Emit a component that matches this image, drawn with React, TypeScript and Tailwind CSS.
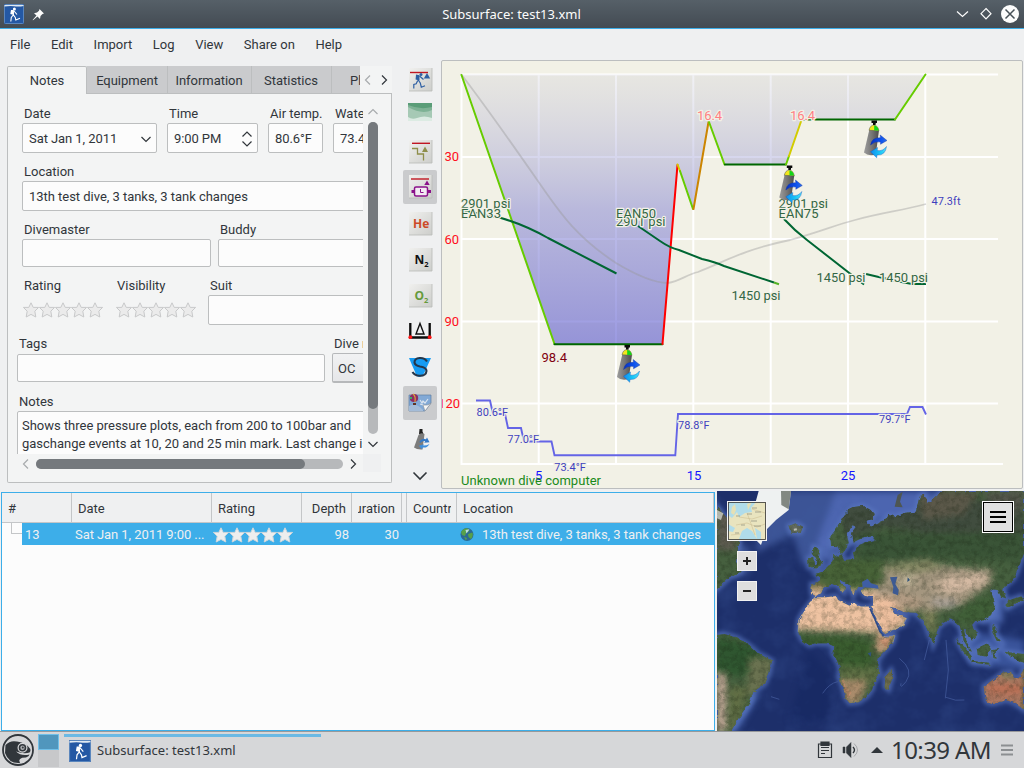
import React from 'react';

const STAR = 'M8 0.8 L10.2 5.4 L15.6 5.4 L11.8 9.2 L12.8 15 L8 12.4 L3.2 15 L4.2 9.2 L0.4 5.4 L5.8 5.4 Z';

function Stars({ fill, stroke }: { fill: string; stroke: string }) {
  return (
    <div className="flex">
      {[0, 1, 2, 3, 4].map((i) => (
        <svg key={i} width="16" height="16" viewBox="0 0 16 16">
          <path d={STAR} fill={fill} stroke={stroke} strokeWidth="1" />
        </svg>
      ))}
    </div>
  );
}

function Chevron({ dir, color = '#31363b', size = 12 }: { dir: 'l' | 'r' | 'u' | 'd'; color?: string; size?: number }) {
  const d = {
    l: 'M8 1.5 L3.5 6 L8 10.5',
    r: 'M4 1.5 L8.5 6 L4 10.5',
    u: 'M1.5 8 L6 3.5 L10.5 8',
    d: 'M1.5 4 L6 8.5 L10.5 4',
  }[dir];
  return (
    <svg className="shrink-0" width={size} height={size} viewBox="0 0 12 12" fill="none" stroke={color} strokeWidth="1.2">
      <path d={d} />
    </svg>
  );
}

function AppIcon({ size }: { size: number }) {
  return (
    <svg className="shrink-0" width={size} height={size} viewBox="0 0 20 20">
      <rect width="20" height="20" rx="1" fill="#2458a4" />
      <rect x="0.5" y="0.5" width="19" height="19" rx="1" fill="none" stroke="#5a86bd" />
      <path d="M0.5 1 H19.5 V2 Q15 3 10 2.2 Q5 1.8 0.5 2.6Z" fill="#dfe9f2" />
      <circle cx="10.4" cy="5" r="1.5" fill="#fff" />
      <path d="M9.5 6.5 L11.3 8.5 L13 10.5 M9 7 L9.5 11 L11.3 13.5 L11.8 16 L16 14.2 M9.2 11 L7.3 13.5 L6.8 17.5" fill="none" stroke="#fff" strokeWidth="1.1" />
      <path d="M7 6 L9.7 6 L10 11 L6.3 10Z" fill="#fff" />
    </svg>
  );
}

function TitleBar() {
  return (
    <div className="flex h-[29px] shrink-0 items-center border-b border-[#3daee9] bg-linear-to-b from-[#566068] to-[#434b53] px-1">
      <AppIcon size={20} />
      <svg className="ml-2" width="13" height="13" viewBox="0 0 13 13">
        <path d="M7.5 1 L12 5.5 L10.5 6 L8.5 8 L8 11 L5.5 8.5 L1 12.3 L0.6 12 L4.5 7.5 L2 5.2 L5 4.6 L7 2.8Z" fill="#fcfcfc" />
      </svg>
      <div className="flex-1 pt-px pl-[24px] text-center font-['Noto_Sans',sans-serif] text-[13px] text-[#fcfcfc]">Subsurface: test13.xml</div>
      <svg width="66" height="20" viewBox="0 0 66 20" fill="none" stroke="#fcfcfc" strokeWidth="1.2">
        <path d="M3 7.5 L8.5 12.5 L14 7.5" />
        <path d="M32 4.5 L37 9.7 L32 15 L27 9.7Z" />
        <circle cx="56" cy="10" r="9" fill="#fcfcfc" stroke="none" />
        <path d="M51.5 5.5 L60.5 14.5 M60.5 5.5 L51.5 14.5" stroke="#475057" strokeWidth="1.5" />
      </svg>
    </div>
  );
}

function MenuBar() {
  return (
    <div className="flex h-[31px] shrink-0 items-center gap-[20.6px] pl-[10px] text-[13px]">
      <span>File</span>
      <span>Edit</span>
      <span>Import</span>
      <span>Log</span>
      <span>View</span>
      <span>Share on</span>
      <span>Help</span>
    </div>
  );
}

const field = 'flex shrink-0 items-center rounded-[2px] border border-[#bcbebf] bg-[#fcfcfc] pt-px';
const label = 'mb-px flex h-[18px] items-center whitespace-nowrap pt-[2px] pl-[2px]';

function NotesForm() {
  return (
    <div className="h-[360px] w-[355px] overflow-hidden pt-[10px]">
      <div className="flex w-[400px] gap-[10px] pl-[14px]">
        <div className="w-[135px] shrink-0">
          <div className={label}>Date</div>
          <div className={`${field} h-[30px] justify-between pr-1 pl-[6px] tracking-[-0.07px]`}>Sat Jan 1, 2011<Chevron dir="d" /></div>
        </div>
        <div className="w-[91px] shrink-0">
          <div className={label}>Time</div>
          <div className={`${field} h-[30px] justify-between pr-1 pl-[6px] tracking-[-0.1px]`}>
            9:00 PM
            <svg width="12" height="16" viewBox="0 0 12 16" fill="none" stroke="#31363b" strokeWidth="1.2"><path d="M1.5 5.5 L6 1 L10.5 5.5 M1.5 10.5 L6 15 L10.5 10.5" /></svg>
          </div>
        </div>
        <div className="w-[55px] shrink-0">
          <div className={label}>Air temp.</div>
          <div className={`${field} h-[30px] pl-[6px] tracking-[-0.1px]`}>80.6°F</div>
        </div>
        <div className="w-[65px] shrink-0">
          <div className={label}>Water temp.</div>
          <div className={`${field} h-[30px] pl-[6px]`}>73.4°F</div>
        </div>
      </div>
      <div className="mt-[9px] w-[400px] pl-[14px]">
        <div className={label}>Location</div>
        <div className={`${field} h-[30px] pl-[6px] tracking-[-0.03px]`}>13th test dive, 3 tanks, 3 tank changes</div>
      </div>
      <div className="mt-[9px] flex w-[400px] gap-[7px] pl-[14px]">
        <div className="w-[189px] shrink-0">
          <div className={label}>Divemaster</div>
          <div className={`${field} h-[28px]`} />
        </div>
        <div className="w-[189px] shrink-0">
          <div className={label}>Buddy</div>
          <div className={`${field} h-[28px]`} />
        </div>
      </div>
      <div className="mt-[9px] flex w-[400px] pl-[14px]">
        <div className="w-[93px] shrink-0">
          <div className={label}>Rating</div>
          <div className="pt-[7px] pl-px"><Stars fill="#ebebeb" stroke="#c8c9ca" /></div>
        </div>
        <div className="w-[93px] shrink-0">
          <div className={label}>Visibility</div>
          <div className="pt-[7px] pl-px"><Stars fill="#ebebeb" stroke="#c8c9ca" /></div>
        </div>
        <div className="w-[200px] shrink-0">
          <div className={label}>Suit</div>
          <div className={`${field} h-[30px]`} />
        </div>
      </div>
      <div className="mt-[9px] flex w-[400px] gap-[7px] pl-[9px]">
        <div className="w-[308px] shrink-0">
          <div className={label}>Tags</div>
          <div className={`${field} mt-[2px] h-[28px]`} />
        </div>
        <div className="w-[80px] shrink-0">
          <div className={label}>Dive mode</div>
          <div className="flex h-[30px] items-center rounded-[2px] border border-b-2 border-[#b6b8ba] bg-linear-to-b from-[#f1f2f3] to-[#e6e7e9] pt-[2px] pl-[5px]">OC</div>
        </div>
      </div>
      <div className="mt-[9px] w-[400px] pl-[9px]">
        <div className={label}>Notes</div>
        <div className="h-[80px] rounded-[2px] border border-[#bcbebf] bg-[#fcfcfc] pt-[5px] pl-[4px] leading-[18px] tracking-[-0.02px] whitespace-nowrap">
          <div>Shows three pressure plots, each from 200 to 100bar and</div>
          <div>gaschange events at 10, 20 and 25 min mark. Last change is</div>
        </div>
      </div>
    </div>
  );
}

function LeftPanel() {
  const tab = 'flex h-[28px] shrink-0 items-center justify-center border-r border-b border-[#bcbebf] bg-[#cacbcd] pt-[2px]';
  return (
    <div className="w-[400px] shrink-0 pt-[6px] pl-[7px]">
      <div className="flex w-[385px] tracking-[-0.03px]">
        <div className="flex h-[28px] w-[80px] shrink-0 items-center justify-center rounded-t-[2px] border border-b-0 border-[#bcbebf] bg-[#f3f4f4]">Notes</div>
        <div className={`${tab} w-[81px]`}>Equipment</div>
        <div className={`${tab} w-[84px] pr-px`}>Information</div>
        <div className={`${tab} w-[80px] pr-px`}>Statistics</div>
        <div className="flex h-[28px] w-[28px] shrink-0 items-center overflow-hidden border-b border-[#bcbebf] bg-[#cacbcd] pt-[2px] pl-[18px] whitespace-nowrap">Photos</div>
        <div className="flex h-[28px] flex-1 items-center justify-around border-b border-[#bcbebf] bg-[#f3f4f4]">
          <Chevron dir="l" color="#a8abad" />
          <Chevron dir="r" />
        </div>
      </div>
      <div className="flex h-[389px] w-[385px] flex-col rounded-b-[2px] border border-t-0 border-[#bcbebf] bg-[#f3f4f4]">
        <div className="flex">
          <NotesForm />
          <div className="flex w-[20px] flex-col items-center pt-[12px]">
            <Chevron dir="u" color="#a8abad" />
            <div className="mt-[4px] mb-[4px] h-[312px] w-[10px] rounded-full bg-[#b7b9bb]">
              <div className="h-[287px] rounded-full bg-[#75797d]" />
            </div>
            <Chevron dir="d" />
          </div>
        </div>
        <div className="flex h-[18px]">
          <div className="flex w-[355px] items-center pt-px pl-[12px]">
            <Chevron dir="l" color="#a8abad" />
            <div className="mx-[4px] h-[10px] w-[307px] rounded-full bg-[#b7b9bb]">
              <div className="h-[10px] w-[269px] rounded-full bg-[#75797d]" />
            </div>
            <Chevron dir="r" />
          </div>
          <div className="w-[18px] bg-[#eff0f1]" />
        </div>
      </div>
    </div>
  );
}

function Tile({ children }: { children: React.ReactNode }) {
  return (
    <svg className="shrink-0" width="36" height="36" viewBox="0 0 36 36">
      <rect x="7" y="6" width="23" height="23" fill="url(#tile)" />
      <path d="M7 29 H30 V6" fill="none" stroke="#b9bab8" strokeWidth="0.8" />
      {children}
    </svg>
  );
}

function Toolbar() {
  const btn = 'flex h-[36px] w-[36px] items-center justify-center';
  const on = 'flex h-[34px] w-[34px] mb-[2px] ml-px items-center justify-center rounded-[2px] bg-[#cacbcd]';
  return (
    <div className="flex w-[41px] shrink-0 flex-col pt-[2px] pl-[2px]">
      <div className={btn}>
        <Tile>
          <path d="M8 10.5 H26" stroke="#c01622" strokeWidth="1.4" />
          <path d="M25 11 L28.2 16.5 H21.8Z" fill="#2e5fa3" />
          <circle cx="19" cy="12.6" r="1.5" fill="#2e5fa3" />
          <path d="M14 12.5 L17.5 13.3 L17.5 18.5 L13.6 17.5Z" fill="#2e5fa3" />
          <path d="M17.5 14 L21.5 17.5 M16.2 18 L18.3 21 L19.3 25.2 L23 23.8 M15.7 18.5 L14.2 21.7 L11.8 22.5 L11.8 26.5" fill="none" stroke="#2e5fa3" strokeWidth="1.2" />
        </Tile>
      </div>
      <div className={btn}>
        <svg width="36" height="36" viewBox="0 0 36 36">
          <rect x="6" y="5" width="24" height="18" fill="#dcebe3" />
          <path d="M6 5 H30 V20 Q22 17 15 20 Q10 22 6 19Z" fill="#a6c9b5" />
          <path d="M6 5 H30 V12 Q20 17 6 9Z" fill="#7eb295" />
          <path d="M6 5 H30 V9 Q18 12 6 7Z" fill="#5a9d78" />
        </svg>
      </div>
      <div className={btn}>
        <Tile>
          <path d="M10 9.3 H28" stroke="#c01622" strokeWidth="1.4" />
          <path d="M23 12.5 L26 18 H20Z" fill="#8e8e4a" />
          <path d="M10 14.5 H15.5 V20 H21.5 V26.5" fill="none" stroke="#8e8e4a" strokeWidth="1.3" />
        </Tile>
      </div>
      <div className={on}>
        <Tile>
          <path d="M9 10 H27" stroke="#c01622" strokeWidth="1.4" />
          <path d="M25 11.5 L27.7 16 H22.3Z" fill="#8a118a" />
          <rect x="12.5" y="18" width="13" height="9" rx="1.5" fill="#f3eaf3" stroke="#8a118a" strokeWidth="1.5" />
          <path d="M9.5 22.5 H12 M26 22.5 H29" stroke="#8a118a" strokeWidth="3" />
          <path d="M18.5 20 V23.5 H21.5" fill="none" stroke="#8a118a" />
        </Tile>
      </div>
      <div className={btn}>
        <Tile><text x="11" y="22.2" className="font-['Open_Sans',sans-serif] text-[12px] font-bold" fill="#cc4a28">He</text></Tile>
      </div>
      <div className={btn}>
        <Tile><text x="12.5" y="22" className="font-['Open_Sans',sans-serif] text-[12px] font-bold" fill="#111">N<tspan dy="3" fontSize="7.5">2</tspan></text></Tile>
      </div>
      <div className={btn}>
        <Tile><text x="12.5" y="22" className="font-['Open_Sans',sans-serif] text-[12px] font-bold" fill="#659a3c">O<tspan dy="3" fontSize="7.5">2</tspan></text></Tile>
      </div>
      <div className={btn}>
        <svg width="36" height="36" viewBox="0 0 36 36" fill="none">
          <path d="M8.3 9 V23.5 H27.7 V9" stroke="#0b0b0b" strokeWidth="2.3" />
          <path d="M14 20 L18 9.5 L22 20Z" stroke="#111" strokeWidth="1.4" />
          <circle cx="8.3" cy="23.2" r="1.9" fill="#ff1414" /><circle cx="27.7" cy="23.2" r="1.9" fill="#ff1414" />
        </svg>
      </div>
      <div className={btn}>
        <svg width="36" height="36" viewBox="0 0 36 36">
          <path d="M7 8 H29 L24 19 Q21 27 17.5 27 Q14.5 27 13 22Z" fill="#169bf2" />
          <path d="M25 11.5 Q22.5 7.5 17.5 8 Q12.5 8.5 12.5 12.5 Q13 15.5 18 16.5 Q24.5 17.5 24.5 21 Q24 26 17.5 25.8 Q12.5 25.5 10.5 22" fill="none" stroke="#25364a" strokeWidth="2.1" />
        </svg>
      </div>
      <div className={on}>
        <svg width="34" height="34" viewBox="0 0 34 34">
          <path d="M6 9 H28 V17 L22 25 H6Z" fill="#82a9d6" stroke="#5e7ea5" strokeWidth="0.7" />
          <path d="M6 20 Q13 16 20 24 V25 H6Z" fill="#a4bcd8" />
          <ellipse cx="11" cy="12" rx="4.2" ry="4" fill="#8b2f64" /><path d="M10 8 Q13 10 12 16" stroke="#dda23b" fill="none" strokeWidth="1.2" /><path d="M7 12 H9" stroke="#3cab66" strokeWidth="2" />
          <path d="M10 18 H13" stroke="#613426" strokeWidth="2" />
          <path d="M17 14 L19 17 L20 15 L22 17 L25 13 M17 18 L23 20" fill="none" stroke="#dbe4ef" strokeWidth="1.2" />
          <path d="M28 17 L22 25 L20 19 Q25 20 28 17Z" fill="#f6f6f6" stroke="#8b9097" strokeWidth="0.6" />
        </svg>
      </div>
      <div className={btn}>
        <svg width="36" height="36" viewBox="0 0 36 36">
          <path d="M17.5 7 H20.5 V9.5 L21.5 12 H17Z" fill="#222" />
          <path d="M16.5 13 Q18.5 10 22.5 12 L20.5 27.5 Q15 28 12 25.5Z" fill="#7c7c7c" />
          <path d="M17.5 19.5 Q20 15.5 24 17.2 L25 15.5 L27.5 20.2 L22.2 20.7 L23.2 19.3 Q21 18.5 18 21Z" fill="#3479c7" />
          <path d="M27.5 22 Q25 26.5 20.5 25.4 L20 27.3 L16.8 23.7 L22 22.2 L21.2 23.6 Q24.5 23.8 27.5 22Z" fill="#3f8edc" />
        </svg>
      </div>
      <div className={btn}>
        <svg width="36" height="36" viewBox="0 0 36 36" fill="none" stroke="#31363b" strokeWidth="1.6"><path d="M11.5 14.5 L18 21 L24.5 14.5" /></svg>
      </div>
      <svg width="0" height="0">
        <defs><linearGradient id="tile" x1="0" y1="0" x2="1" y2="1"><stop offset="0" stopColor="#f0f0ee" /><stop offset="1" stopColor="#cdcecb" /></linearGradient></defs>
      </svg>
    </div>
  );
}

function Tank({ x, y }: { x: number; y: number }) {
  return (
    <g transform={`translate(${x} ${y})`}>
      <path d="M6.5 9 L16 10 L12.8 34.5 Q5 36.5 1 32.5Z" fill="url(#tank)" />
      <path d="M6 10.3 Q7 5.2 11 5 Q15 5.5 16 10.8Z" fill="#f2e51c" stroke="#555" strokeWidth="0.5" />
      <path d="M11.2 5.2 Q15 6 15.8 10.6 H11.2Z" fill="#12d51c" />
      <path d="M8.5 0.5 H14 V3 H12.8 L12.5 5 H10 V3 H8.5Z" fill="#0b0b0b" />
      <path d="M7.5 25 Q9 17 17.5 17.8 L17.2 15 L24 20.5 L17.5 24.3 L17.6 22 Q12 20.8 7.5 25Z" fill="url(#arrowA)" stroke="#1434a0" strokeWidth="0.4" />
      <path d="M23.5 26.5 Q22.5 35.5 14 35 L13.7 37.8 L7.5 31.8 L14.5 27.5 L14.2 30.5 Q20 31.5 23.5 26.5Z" fill="url(#arrowB)" stroke="#0d59c4" strokeWidth="0.4" />
    </g>
  );
}

const HALO = { stroke: '#f2f1e6', strokeWidth: 2.5, paintOrder: 'stroke' as const, strokeLinejoin: 'round' as const };

function Profile() {
  return (
    <div className="w-[582px] shrink-0 overflow-hidden rounded-[2px] border border-[#bcbebf] bg-[#f2f1e6]">
      <svg width="580" height="427" viewBox="442 61 580 427" className="font-[Roboto,sans-serif] text-[13px]" fill="none">
        <defs>
          <linearGradient id="depth" gradientUnits="userSpaceOnUse" x1="0" y1="74" x2="0" y2="344">
            <stop offset="0" stopColor="#c8c8d4" stopOpacity="0.26" />
            <stop offset="0.5" stopColor="#8080d2" stopOpacity="0.5" />
            <stop offset="1" stopColor="#5a58ce" stopOpacity="0.61" />
          </linearGradient>
          <linearGradient id="tank"><stop offset="0.1" stopColor="#969696" /><stop offset="0.5" stopColor="#777" /><stop offset="1" stopColor="#4c4c4c" /></linearGradient>
          <linearGradient id="arrowA"><stop offset="0" stopColor="#0a2fb8" /><stop offset="0.6" stopColor="#0a50ee" /><stop offset="1" stopColor="#2d6de8" /></linearGradient>
          <linearGradient id="arrowB"><stop offset="0" stopColor="#1188ee" /><stop offset="0.6" stopColor="#18c8f6" /><stop offset="1" stopColor="#55dcf6" /></linearGradient>
        </defs>
        <g stroke="#fff" strokeWidth="2">
          <path d="M461 74.5 H998 M461 157 H998 M461 239 H998 M461 321.5 H998 M461 403.5 H998 M461 464 H1003" />
          <path d="M461.5 74 V465 M538.7 74 V465 M616 74 V465 M693.3 74 V465 M770.7 74 V465 M848 74 V465 M925.3 74 V465" />
        </g>
        <path d="M461.5 74.5 L554.5 344 H662.5 L678 165 L693.5 209.5 L709 121 L724.5 164.5 H786 L801.5 119.5 H895 L925.5 74.5Z" fill="url(#depth)" />
        <path d="M461 74 C490 112 515 148 540 184 C562 216 578 238 616 263 C636 275 655 283 668 283 C680 281 686 275 698 272 C724 262 742 250 790 240 C820 232 835 225 855 220 C885 212 900 211 926 204" stroke="#999" strokeOpacity="0.4" strokeWidth="1.8" />
        <g strokeWidth="2" strokeLinecap="round">
          <path d="M461.5 75 L554.5 344" stroke="#66cc00" />
          <path d="M554.5 344.3 H662.5" stroke="#006600" />
          <path d="M662.5 344 L677.5 165" stroke="#ff0000" />
          <path d="M677.5 164.5 L680 171" stroke="#d7c800" />
          <path d="M680 171 L693 209" stroke="#66cc00" />
          <path d="M693.5 209 L708.5 122" stroke="#cc8500" />
          <path d="M709 122 L724.5 164.5" stroke="#66cc00" />
          <path d="M725 164.5 H786" stroke="#006600" />
          <path d="M786 164.5 L789 156" stroke="#66cc00" />
          <path d="M789 156 L801.5 120" stroke="#d3cc00" />
          <path d="M801.5 119.5 H895" stroke="#006600" />
          <path d="M895 119.5 L925.5 74.5" stroke="#66cc00" />
        </g>
        <g stroke="#006633" strokeWidth="2">
          <path d="M461 210 L501 218 Q525 225 548 238 L616.5 273.5" />
          <path d="M638 226 L660 241 Q670 248 679 250 L702 259 Q715 262 724 266 L774 282.5" />
          <path d="M774 282.5 L779 284.3" stroke="#54b327" />
          <path d="M784 219 Q795 231 807 240 L848 272 L864 284.5 M866 274 Q895 281 912 284 H926" />
        </g>
        <path d="M476 400.5 H490 L493 414 H505 L508 428 H521 L524 441.5 H551.5 L554.5 455.3 H675.3 L678 414 H907 L910 407 H922.5 L926 414.5" stroke="#6464e6" strokeWidth="1.9" />
        <Tank x={616} y={344.5} />
        <Tank x={863} y={120} />
        <g fill="#336644" {...HALO}>
          <text x="461" y="208" textLength="49.5">2901 psi</text>
          <text x="461" y="218" textLength="40">EAN33</text>
          <text x="616" y="226" textLength="49.5">2901 psi</text>
          <text x="616" y="217.5" textLength="40">EAN50</text>
          <text x="778.5" y="208" textLength="49.5">2901 psi</text>
          <text x="778.5" y="218" textLength="40">EAN75</text>
          <text x="731.5" y="300" textLength="49">1450 psi</text>
          <text x="816.5" y="282" textLength="49">1450 psi</text>
          <text x="879" y="282" textLength="49">1450 psi</text>
        </g>
        <Tank x={778.3} y={165} />
        <g fill="#ff7f84" {...HALO}>
          <text x="697" y="119.5" textLength="25">16.4</text>
          <text x="790" y="119.5" textLength="25">16.4</text>
        </g>
        <text x="541.5" y="362" fill="#7f0010" textLength="25.5">98.4</text>
        <g fill="#ff0d20" textAnchor="end">
          <text x="459" y="161">30</text>
          <text x="459" y="243.6">60</text>
          <text x="459" y="325.8">90</text>
          <text x="460" y="408">120</text>
        </g>
        <g fill="#1414ff" textAnchor="middle">
          <text x="538.7" y="479.5">5</text>
          <text x="694" y="479.5">15</text>
          <text x="848" y="479.5">25</text>
        </g>
        <g fill="#3f3fbe" fontSize="11" {...HALO}>
          <text x="476.5" y="415.5" textLength="31.5">80.6°F</text>
          <text x="507.5" y="443" textLength="31.5">77.0°F</text>
          <text x="554.3" y="470.5" textLength="31.5">73.4°F</text>
          <text x="678" y="429.3" textLength="31.5">78.8°F</text>
          <text x="879" y="423" textLength="31.5">79.7°F</text>
          <text x="931.5" y="204.5" textLength="29">47.3ft</text>
        </g>
        <text x="461" y="485.3" fill="#1a8a1a" textLength="140">Unknown dive computer</text>
      </svg>
    </div>
  );
}

function DiveList() {
  const th = 'flex h-[29px] shrink-0 items-center overflow-hidden whitespace-nowrap border-r border-[#c4c6c8] pt-[2px]';
  return (
    <div className="ml-px h-[239px] w-[714px] shrink-0 border border-[#3daee9] bg-[#fcfcfc]">
      <div className="flex h-[30px] border-b border-[#c4c6c8] bg-[#eff0f1]">
        <div className={`${th} w-[70px] pl-[6px]`}>#</div>
        <div className={`${th} w-[140px] pl-[6px]`}>Date</div>
        <div className={`${th} w-[90px] pl-[6px]`}>Rating</div>
        <div className={`${th} w-[50px] justify-end pr-[5px]`}>Depth</div>
        <div className={`${th} w-[50px] px-[6px]`}><div className="flex w-[38px] justify-end overflow-hidden">Duration</div></div>
        <div className={`${th} w-[5px]`} />
        <div className={`${th} w-[50px] pl-[6px]`}><div className="w-[38px] overflow-hidden">Country</div></div>
        <div className={`${th} flex-1 pl-[6px]`}>Location</div>
      </div>
      <div className="flex h-[22px]">
        <div className="flex w-[20px] justify-end"><div className="mt-[-1px] h-[12px] w-[11px] border-b border-l border-[#c4c6c8]" /></div>
        <div className="flex flex-1 items-center bg-[#3daee9] pt-px whitespace-nowrap text-[#eff0f1]">
          <div className="w-[50px] pl-[3px]">13</div>
          <div className="w-[141px] pl-[3px] tracking-[-0.07px]">Sat Jan 1, 2011 9:00 ...</div>
          <div className="w-[89px]"><Stars fill="#eeeeee" stroke="#cfd6da" /></div>
          <div className="w-[47px] text-right">98</div>
          <div className="w-[50px] text-right">30</div>
          <svg className="ml-[61px]" width="14" height="15" viewBox="0 0 14 15">
            <circle cx="7" cy="7.5" r="6.5" fill="#2b6a95" />
            <path d="M1 5 Q4 0.5 8 1.5 L9.5 4 L6 6 L5 9 L2 8Z M8 7 L12.5 5.5 Q13.5 9 11 12 L8.5 10Z M4 10 L7 11 L6 13.5Z" fill="#57a14a" />
            <path d="M5.5 3 L9.5 2.2 L6.5 6.5Z" fill="#bfe0e4" />
          </svg>
          <div className="ml-[8px] tracking-[-0.03px]">13th test dive, 3 tanks, 3 tank changes</div>
        </div>
      </div>
    </div>
  );
}

const AFRICA = 'M248 390 L262 365 L280 342 L296 322 L330 322 L360 318 L366 330 L380 337 L402 348 L412 340 L435 350 L458 350 L466 370 L482 400 L492 425 L503 440 L537 437 L530 460 L505 486 L488 505 L484 525 L492 550 L475 575 L468 600 L452 620 L428 637 L400 640 L388 622 L380 590 L368 560 L372 535 L362 510 L350 490 L352 468 L335 460 L300 460 L280 466 L258 450 L246 425Z';
const EURASIA = 'M288 312 L286 282 L310 280 L313 262 L298 252 L320 245 L340 225 L350 212 L352 190 L366 200 L378 196 L385 210 L415 208 L412 190 L422 178 L430 165 L455 155 L480 150 L470 138 L430 148 L410 158 L405 130 L420 110 L410 105 L392 130 L398 158 L388 180 L374 196 L364 168 L345 168 L343 140 L365 110 L385 75 L408 52 L440 48 L476 68 L470 88 L448 92 L465 110 L500 95 L520 75 L540 80 L560 70 L600 65 L612 18 L625 14 L635 40 L650 30 L680 3 L924 3 L924 190 L905 240 L890 270 L865 290 L862 300 L870 325 L855 320 L845 300 L822 298 L832 325 L838 345 L828 375 L800 392 L778 392 L768 405 L784 435 L768 452 L750 430 L742 410 L752 455 L768 485 L760 482 L742 450 L732 412 L712 392 L702 388 L680 400 L665 418 L658 450 L648 452 L636 425 L622 390 L608 378 L598 368 L560 366 L538 355 L522 350 L534 370 L552 376 L572 385 L562 405 L530 420 L504 432 L492 410 L475 375 L464 350 L474 345 L474 322 L446 318 L436 300 L450 292 L424 290 L418 300 L412 316 L400 285 L380 272 L372 272 L386 292 L384 308 L362 284 L350 282 L328 290 L312 310 L300 318Z';
const SAMERICA = 'M3 435 L25 432 L60 442 L100 465 L125 490 L168 512 L160 545 L148 580 L112 605 L100 640 L70 680 L45 724 L3 724Z';
const AUSTRALIA = 'M803 590 L830 570 L860 548 L885 545 L890 560 L912 562 L924 530 L924 660 L898 640 L870 630 L830 642 L810 636Z';
const OTHER = 'M276 205 L292 200 L294 228 L278 232Z M292 170 L310 180 L306 200 L320 220 L305 235 L292 235 L304 215 L290 190Z M218 108 L240 100 L260 112 L254 128 L225 128Z M508 560 L525 540 L530 560 L518 600 L506 590Z M720 445 L745 470 L768 500 L762 510 L738 480Z M765 512 L820 518 L820 524 L768 518Z M782 475 L815 460 L825 475 L812 500 L785 495Z M828 478 L850 474 L836 488 L842 506 L832 504Z M868 485 L924 492 L924 520 L890 505Z M830 405 L842 410 L838 430 L856 455 L842 452 L828 425Z M868 345 L882 330 L915 318 L924 330 L890 345 L875 355Z M650 448 L656 455 L652 464Z';
const NAMERICA = 'M3 50 L25 75 L45 100 L70 155 L60 215 L75 245 L40 262 L3 298Z';
const COASTS = [AFRICA, EURASIA, SAMERICA, AUSTRALIA, OTHER, NAMERICA];

function WorldMap() {
  return (
    <svg className="block" width="307" height="240" viewBox="3 3 921 720" fill="none">
      <defs>
        <clipPath id="land">{COASTS.map((d, i) => <path key={i} d={d} />)}</clipPath>
        <filter id="soft" x="-20%" y="-20%" width="140%" height="140%" colorInterpolationFilters="sRGB"><feGaussianBlur stdDeviation="10" /></filter>
        <filter id="shelf" x="-5%" y="-5%" width="110%" height="110%" colorInterpolationFilters="sRGB"><feGaussianBlur stdDeviation="6" /></filter>
        <filter id="rough" x="0" y="0" width="100%" height="100%" colorInterpolationFilters="sRGB">
          <feTurbulence type="fractalNoise" baseFrequency="0.06" numOctaves="3" seed="5" result="n" />
          <feDisplacementMap in="SourceGraphic" in2="n" scale="12" xChannelSelector="R" yChannelSelector="G" />
        </filter>
        <filter id="grain" x="0" y="0" width="100%" height="100%" colorInterpolationFilters="sRGB">
          <feTurbulence type="fractalNoise" baseFrequency="0.06" numOctaves="4" seed="8" />
          <feColorMatrix values="0 0 0 0 0.1  0 0 0 0 0.14  0 0 0 0 0.08  2 0 0 0 -0.8" />
        </filter>
        <filter id="light" x="0" y="0" width="100%" height="100%" colorInterpolationFilters="sRGB">
          <feTurbulence type="fractalNoise" baseFrequency="0.012" numOctaves="4" seed="3" />
          <feColorMatrix values="0 0 0 0 0.25  0 0 0 0 0.36  0 0 0 0 0.62  0 2 0 0 -0.85" />
        </filter>
      </defs>
      <rect width="930" height="730" fill="#1d2f6a" />
      <g filter="url(#soft)">
        <path d="M180 3 H924 V90 L560 110 L300 200 L260 230 L230 130 L120 190 L130 100Z" fill="#3c5496" />
        <path d="M360 3 H640 V75 L520 100 L400 50 L340 160 L300 160Z" fill="#4c65b0" />
        <path d="M310 140 L345 150 L350 215 L300 205Z" fill="#5069b4" />
        <path d="M730 420 L924 450 V540 L760 520Z" fill="#3a549b" />
        <path d="M820 290 L860 300 V400 L790 400Z" fill="#4e69b2" />
        <path d="M30 120 L100 180 L100 250 L40 260Z" fill="#3d5596" />
        <path d="M280 480 L350 560 L330 700 L220 690Z" fill="#182a64" />
        <path d="M100 610 L130 610 L90 680 L60 724 H40Z" fill="#4e6bb5" />
      </g>
      <rect width="930" height="730" filter="url(#light)" opacity="0.3" />
      <g stroke="#5b78c2" strokeWidth="14" filter="url(#shelf)" opacity="0.75">{COASTS.map((d, i) => <path key={i} d={d} />)}</g>
      <g stroke="#4c66a8" strokeWidth="3" opacity="0.6"><path d="M550 505 Q595 540 570 575 Q550 600 555 580 M690 450 L697 540 L688 625 M640 450 L625 510 M320 610 Q340 580 365 575 M690 622 Q720 635 745 630 M165 620 L190 628" /></g>
      <path d="M128 3 H225 L218 60 L180 90 L150 120 L135 165 L120 150 L115 50Z" fill="#eef1f1" />
      <path d="M195 3 H225 L218 58 L196 45Z" fill="#676e67" opacity="0.8" />
      <g filter="url(#rough)">
        <g clipPath="url(#land)">
          <rect width="924" height="726" fill="#46603f" />
          <g filter="url(#soft)">
            <path d="M340 30 H924 V130 H620 L500 110 L400 150Z" fill="#414d3f" />
            <path d="M430 130 H924 V215 L700 200 L430 215Z" fill="#3a5437" />
            <path d="M610 3 H790 L740 75 L620 90Z" fill="#5b5849" />
            <path d="M800 3 H924 V60 L850 80Z" fill="#54564c" />
            <path d="M300 210 H500 V300 H300Z" fill="#486338" />
            <path d="M500 235 L620 210 L700 230 L830 240 L825 280 L790 305 L735 345 L650 365 L470 345 L440 310 L510 270Z" fill="#a4967f" />
            <path d="M500 222 L640 206 L680 235 L600 250 L520 245Z" fill="#868965" />
            <path d="M470 318 L560 310 L620 330 L600 366 L540 350Z" fill="#b29b83" />
            <path d="M645 290 L700 260 L810 250 L810 275 L740 305 L700 310Z" fill="#d6bba4" />
            <path d="M550 255 L590 250 L605 285 L555 290Z" fill="#beb297" />
            <path d="M280 280 H320 V318 H285Z" fill="#8b7a52" />
            <path d="M620 365 H660 V430 L625 405Z" fill="#7d8259" />
            <path d="M640 325 L720 330 L725 352 L660 350Z" fill="#aea59d" />
            <path d="M740 350 L840 310 L830 400 L710 400Z" fill="#405f38" />
            <path d="M230 300 H475 L500 428 L230 418Z" fill="#efc3a2" />
            <path d="M470 320 L520 320 L585 390 L500 440Z" fill="#eebf9e" />
            <path d="M480 435 L540 435 L505 490 L475 480Z" fill="#c39a7a" />
            <path d="M245 445 L400 443 L470 455 V530 L370 530 L345 475 L250 472Z" fill="#3a5d2f" />
            <path d="M370 530 H490 V580 H375Z" fill="#5e7045" />
            <path d="M370 570 H455 L430 642 H390Z" fill="#a98b6b" />
            <path d="M500 540 H530 V600 H505Z" fill="#7c7253" />
            <path d="M3 440 L160 480 V550 L3 560Z" fill="#2f5630" />
            <path d="M100 500 H170 V590 L90 620Z" fill="#6a7250" />
            <path d="M3 550 H30 V724 H3Z" fill="#c4a998" />
            <path d="M40 590 H100 L60 724 H40Z" fill="#616e45" />
            <path d="M795 540 H924 V660 H795Z" fill="#ad7761" />
            <path d="M820 585 H924 V610 H820Z" fill="#bd6f54" />
            <path d="M860 540 L900 550 L890 570 L850 560Z" fill="#7f7c58" />
            <path d="M3 60 H60 V180 H3Z" fill="#5e5c51" />
            <path d="M218 100 H262 V130 H218Z" fill="#6c6f66" />
          </g>
          <path d="M380 560 L390 590 L405 610 L396 625 L384 600Z M490 450 L525 440 L510 475Z" fill="#d89270" opacity="0.5" />
          <rect width="930" height="730" filter="url(#grain)" opacity="0.35" />
        </g>
      </g>
      <path d="M246 425 L248 390 L280 342 L296 322 M402 348 L412 340 L435 350 L458 350 M503 440 L537 437 L530 460 M530 420 L562 405 L572 385" stroke="#f5ddc8" strokeWidth="2" opacity="0.45" />
      <path d="M462 356 L478 390 L492 425 L503 437" stroke="#304c88" strokeWidth="5" />
      <path d="M522 262 L544 260 L538 282 L548 300 L546 316 L530 310 L532 290Z" fill="#3d5a92" />
      <path d="M440 292 L438 276 L455 266 L465 280 L485 286 L488 296 L462 293Z" fill="#3f5ea3" />
      <path d="M575 262 L582 270 L574 276Z M455 490 L466 486 L464 500Z" fill="#315379" />
      <path d="M536 50 L545 15 L560 5 L552 35 L560 52Z" fill="#4e5652" />
      <path d="M3 60 L22 70 L15 90 L3 85Z M233 116 L242 115 L243 121 L234 122Z" fill="#dfe2dc" opacity="0.7" />
    </svg>
  );
}

function EuropeThumb() {
  return (
    <svg width="40" height="40" viewBox="0 0 40 40">
      <rect width="40" height="40" fill="#e9e4bf" />
      <path d="M1 1 H29 L24 7 L25 11 L18 12 L12 16 L10 11 L5 17 L1 14Z M1 23 L8 27 L6 31 L1 30Z M15 30 L20 27 L25 30 L30 38 H12Z M28 27 L34 31 V38 H30Z" fill="#b0dcea" />
      <path d="M5 6 L8 3 L9 9 L7 14 L4 12Z M20 3 L25 1 L21 9Z" fill="#e5e0b5" />
      <path d="M12 16 L25 18 L35 15 M9 24 L20 22 L30 26 L38 23 M20 12 L23 20 L28 34 M25 8 L38 12 M4 34 L13 33" fill="none" stroke="#c9b98d" strokeWidth="0.5" />
      <path d="M9 15 H13 M20 13 H25 M24 20 H30 M14 24 H18 M28 11 H34 M27 25 H34 M8 32 H12 M25 7 H30" stroke="#8d8c7c" strokeWidth="0.7" />
      <rect x="0.5" y="0.5" width="39" height="39" fill="none" stroke="#f5f5f5" />
      <rect x="1.5" y="1.5" width="37" height="37" fill="none" stroke="#333" strokeWidth="0.8" />
    </svg>
  );
}

function MapPane() {
  const zoom = 'flex h-[20px] w-[20px] items-center justify-center border border-[#f2f2f2] bg-[#dedede]';
  return (
    <div className="relative ml-[2px] h-[240px] w-[307px] shrink-0 overflow-hidden">
      <WorldMap />
      <div className="absolute top-[10px] left-[10px] flex flex-col items-center gap-[10px]">
        <EuropeThumb />
        <div className={zoom}><svg width="10" height="10" viewBox="0 0 10 10" stroke="#222" strokeWidth="2"><path d="M1 5 H9 M5 1 V9" /></svg></div>
        <div className={zoom}><svg width="10" height="10" viewBox="0 0 10 10" stroke="#222" strokeWidth="2"><path d="M1 5 H9" /></svg></div>
      </div>
      <div className="absolute top-[10px] left-[265px] flex h-[32px] w-[32px] items-center justify-center border border-white bg-black p-px">
        <div className="flex h-[28px] w-[28px] items-center justify-center bg-[#e0e0e0]">
          <svg width="16" height="12" viewBox="0 0 16 12" stroke="#000" strokeWidth="2"><path d="M0 1 H16 M0 6 H16 M0 11 H16" /></svg>
        </div>
      </div>
    </div>
  );
}

function Taskbar() {
  return (
    <div className="flex h-[37px] shrink-0 items-start border-t border-[#98999b] bg-[#d6d7d9] font-['Noto_Sans',sans-serif] text-[#31363b]">
      <svg className="mt-[2px] ml-[2px]" width="32" height="32" viewBox="0 0 32 32">
        <circle cx="16" cy="16" r="15" fill="none" stroke="#31363b" strokeWidth="1.8" />
        <path d="M3.5 11 Q8 6 15 7.5 Q25 9 28.3 15 Q29 17 27.5 18.5 Q22 20.5 14 17.5 Q19 22.5 27.5 20.5 Q27 22.5 24 23.5 Q15 23.5 18 29 Q7 30 3 19Z" fill="#31363b" />
        <circle cx="20.5" cy="13.8" r="4.4" fill="#31363b" stroke="#d6d7d9" strokeWidth="1.2" />
        <circle cx="20.5" cy="13.8" r="2.2" fill="#aeb0b3" />
        <circle cx="20.8" cy="13.4" r="1" fill="#31363b" />
      </svg>
      <div className="mt-[2px] ml-[4px] w-[21px]">
        <div className="h-[16px] border border-[#70bfe8] bg-[#5096bd]" />
        <div className="h-[17px] bg-[#c7c8ca]" />
      </div>
      <div className="mt-[2px] ml-[5px] flex h-[33px] w-[257px] items-center border-t-[3px] border-[#6bb9e4] pb-[2px] pl-[5px] text-[13px]">
        <AppIcon size={22} />
        <span className="ml-[6px]">Subsurface: test13.xml</span>
      </div>
      <div className="flex h-[36px] flex-1 items-center justify-end pr-[11px]">
        <svg width="16" height="18" viewBox="0 0 16 18" fill="none" stroke="#31363b" strokeWidth="1.2">
          <path d="M1.5 3 H14.5 V16.5 H1.5Z" /><path d="M4 6.5 H12 M4 9.5 H12 M4 12.5 H8" /><path d="M4 1 H12 V4.5 H4Z" fill="#31363b" />
        </svg>
        <svg className="ml-[9px]" width="18" height="18" viewBox="0 0 18 18" fill="none" stroke="#31363b">
          <path d="M1 6 H3 V12 H1Z M4.5 6 L9 1.5 V16.5 L4.5 12Z" fill="#31363b" strokeWidth="0.5" /><path d="M11 6 Q14 9 11 12" strokeWidth="1.4" /><path d="M12 2.5 Q19 9 12 15.5" strokeOpacity="0.3" />
        </svg>
        <svg className="ml-[11px]" width="12" height="8" viewBox="0 0 12 8"><path d="M0 7 L6 1 L12 7Z" fill="#31363b" /></svg>
        <span className="ml-[8px] text-[24px] leading-[36px] tracking-[-0.6px]">10:39 AM</span>
        <svg className="ml-[10px]" width="12" height="12" viewBox="0 0 12 12" stroke="#8c8f92" strokeWidth="1.8"><path d="M0 1.5 H12 M0 6 H12 M0 10.5 H12" /></svg>
      </div>
    </div>
  );
}

export default function App() {
  return (
    <div className="flex h-[768px] w-[1024px] flex-col overflow-hidden bg-[#eff0f1] font-[Roboto,sans-serif] text-[13px] text-[#31363b]">
      <TitleBar />
      <MenuBar />
      <div className="flex h-[429px] shrink-0">
        <LeftPanel />
        <Toolbar />
        <Profile />
      </div>
      <div className="flex h-[242px] shrink-0 items-end">
        <DiveList />
        <MapPane />
      </div>
      <Taskbar />
    </div>
  );
}
